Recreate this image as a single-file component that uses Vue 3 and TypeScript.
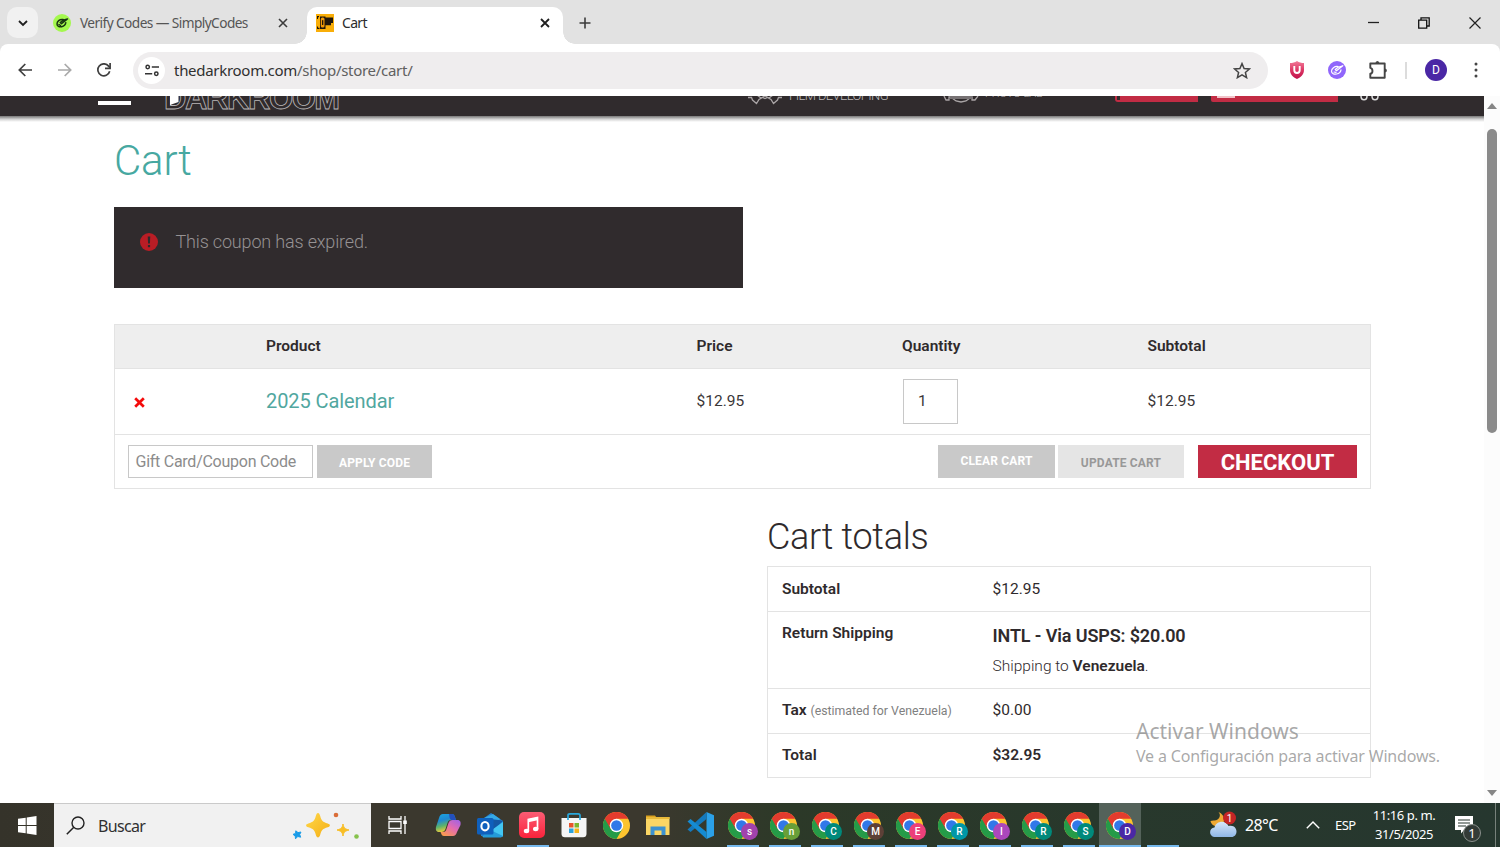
<script setup lang="ts">
interface TaskApp {
  kind: 'copilot' | 'outlook' | 'music' | 'store' | 'chrome' | 'files' | 'code' | 'empty'
  letter?: string
  color?: string
  open?: boolean
  active?: boolean
}

const profile = (letter: string, color: string, active = false): TaskApp => ({
  kind: 'chrome', letter, color, open: true, active,
})

const apps: TaskApp[] = [
  { kind: 'copilot' },
  { kind: 'outlook' },
  { kind: 'music', open: true },
  { kind: 'store' },
  { kind: 'chrome' },
  { kind: 'files' },
  { kind: 'code' },
  profile('s', '#a142ad'),
  profile('n', '#689f38'),
  profile('C', '#00897b'),
  profile('M', '#5d4037'),
  profile('E', '#ec407a'),
  profile('R', '#0097a7'),
  profile('I', '#ab47bc'),
  profile('R', '#00897b'),
  profile('S', '#00897b'),
  profile('D', '#4a27a5', true),
  { kind: 'empty', open: true },
]
</script>

<template>
  <div class="screen">
    <div class="tabstrip">
      <button class="tab-search">
        <svg width="12" height="12" viewBox="0 0 12 12"><path d="M2 4l4 4 4-4" fill="none" stroke="#1f1f1f" stroke-width="1.8" /></svg>
      </button>
      <div class="tab idle">
        <svg class="fav" width="18" height="18" viewBox="0 0 18 18">
          <circle cx="9" cy="9" r="9" fill="#a4f84e" />
          <path d="M10 5.500C6.500 5 4 7.500 4 10c0 2.300 2.300 3.200 4.600 2.700 2.400-.5 3.900-2 4.200-4M7.200 8.500l1.300 1.200L14.500 5l-4.300 1.300zM6 10.500l1.500 1" fill="none" stroke="#183410" stroke-width="1.500" stroke-linecap="round" stroke-linejoin="round" />
        </svg>
        <span class="tab-title t1">Verify Codes — SimplyCodes</span>
        <svg class="x x1" width="10" height="10" viewBox="0 0 10 10"><path d="M1 1l8 8M9 1L1 9" stroke="#3c3c3c" stroke-width="1.6" /></svg>
      </div>
      <div class="tab current">
        <svg class="fav" width="18" height="18" viewBox="0 0 18 18">
          <rect width="18" height="18" fill="#f9ae08" />
          <path d="M1 2h2v1.300H2V5H1zM1 12.500h1v1.300h1.500V15H1zM4 2.500h5.500v12.500H4zM9.500 3.500H17v5.500h-2v2.300H9.500z" fill="#20170c" />
          <rect x="4.800" y="3.500" width="3.700" height="10" rx="1.500" fill="#f39a07" />
          <rect x="6" y="6" width="1.300" height="5" rx=".6" fill="#20170c" />
        </svg>
        <span class="tab-title t2">Cart</span>
        <svg class="x x2" width="10" height="10" viewBox="0 0 10 10"><path d="M1 1l8 8M9 1L1 9" stroke="#1f1f1f" stroke-width="1.8" /></svg>
      </div>
      <svg class="plus" width="12" height="12" viewBox="0 0 12 12"><path d="M6 .5v11M.5 6h11" stroke="#3c3c3c" stroke-width="1.6" /></svg>
      <div class="window-controls">
        <svg width="12" height="12" viewBox="0 0 12 12"><path d="M1 5.500h11" stroke="#222" stroke-width="1.300" /></svg>
        <svg width="12" height="12" viewBox="0 0 12 12"><path d="M.7 3.200h8v8h-8zM3 3V.8h8.200V9H9" fill="none" stroke="#111" stroke-width="1.300" /></svg>
        <svg width="12" height="12" viewBox="0 0 12 12"><path d="M.5.5l11 11M11.500.5l-11 11" stroke="#222" stroke-width="1.200" /></svg>
      </div>
    </div>

    <div class="toolbar">
      <svg class="nav-back" width="14" height="14" viewBox="0 0 14 14"><path d="M14 7H1.500M7.300 1L1.300 7l6 6" fill="none" stroke="#3f3f3f" stroke-width="1.700" /></svg>
      <svg class="nav-forward" width="14" height="14" viewBox="0 0 14 14"><path d="M0 7h12.500M6.700 1l6 6-6 6" fill="none" stroke="#a9a9a9" stroke-width="1.700" /></svg>
      <svg class="nav-reload" width="14" height="14" viewBox="0 0 14 14"><path d="M12.700 8.300A6 6 0 1 1 11.600 3.100L13 4.600" fill="none" stroke="#3f3f3f" stroke-width="1.700" /><path d="M13.100 0v5.300H8" fill="none" stroke="#3f3f3f" stroke-width="1.700" /></svg>
      <div class="omnibox">
        <span class="site-info">
          <svg width="14" height="13" viewBox="0 0 14 13" fill="none" stroke="#333" stroke-width="1.500"><circle cx="2.700" cy="3" r="1.700" /><path d="M6.800 3H14M0 9.800h7.200" /><circle cx="11.300" cy="9.800" r="1.700" /></svg>
        </span>
        <span class="url">thedarkroom.com<em>/shop/store/cart/</em></span>
        <svg class="star" width="18" height="17" viewBox="0 0 18 17"><path d="M9 1.600l2.100 4.900 5.300.45-4 3.500 1.200 5.200L9 12.900l-4.600 2.750 1.200-5.200-4-3.500 5.300-.45z" fill="none" stroke="#444" stroke-width="1.500" /></svg>
      </div>
      <svg class="ext-u" width="16" height="18" viewBox="0 0 16 18">
        <defs><linearGradient id="shield" x1="0" y1="0" x2="0" y2="1"><stop offset="0" stop-color="#f27b98" /><stop offset=".5" stop-color="#dd3765" /><stop offset="1" stop-color="#bf124b" /></linearGradient></defs>
        <path d="M8 0c2 1.400 4.500 2 7 2v7c0 4.500-3 7-7 9-4-2-7-4.500-7-9V2c2.500 0 5-.6 7-2z" fill="url(#shield)" />
        <path d="M5.300 5v4.300c0 3.600 5.400 3.600 5.400 0V5" fill="none" stroke="#fff" stroke-width="1.900" />
      </svg>
      <svg class="ext-s" width="18" height="18" viewBox="0 0 18 18">
        <circle cx="9" cy="9" r="9" fill="#9066fb" />
        <path d="M10 5.500C6.500 5 3.500 7.500 3.500 10.300c0 2.300 2.600 3.200 5.100 2.700 2.600-.5 4.100-2 4.400-4.200M7.200 8.500l1.300 1.200L14.800 4.700l-4.600 1.600zM6 11l2 .3" fill="none" stroke="#fff" stroke-width="1.200" stroke-linecap="round" stroke-linejoin="round" />
      </svg>
      <svg class="ext-p" width="20" height="20" viewBox="0 0 20 20"><path d="M2.300 3.500h14.400v14.200H2.300v-4c2.900-.4 2.900-5.200 0-5.800z" fill="none" stroke="#454545" stroke-width="1.900" stroke-linejoin="round" /><path d="M7.400 3.500a2 2.500 0 0 1 4 0zM16.700 8.400a2.200 2 0 0 1 0 4z" fill="#454545" /></svg>
      <i class="bar"></i>
      <span class="avatar">D</span>
      <svg class="dots" width="4" height="16" viewBox="0 0 4 16" fill="#444"><circle cx="2" cy="2" r="1.500" /><circle cx="2" cy="8" r="1.500" /><circle cx="2" cy="14" r="1.500" /></svg>
    </div>

    <div class="viewport">
      <div class="page">
        <header class="site-header">
          <span class="burger"></span>
          <span class="logo">
            DARKROOM
            <svg class="wedge" width="9" height="9" viewBox="0 0 9 9"><path d="M0 0h8.500v6L0 9z" fill="#fff" /></svg>
          </span>
          <svg class="nav-icon film" width="34" height="10" viewBox="0 0 34 10"><path d="M0 2.500h3.500L4.500 5l4 3.500 2.500-4 3.500-2 2.500 1 2.500-1 3.500 2 2.500 4 4-3.500 1-2.500H34M9 0l4 3 4-2 4 2 4-3" fill="none" stroke="#aaa5a6" stroke-width="1.300" /></svg>
          <span class="nav-text film-text">FILM DEVELOPING</span>
          <svg class="nav-icon lab" width="36" height="7" viewBox="0 0 36 7"><path d="M1 0l2 4h3V1h23v3h3l3-4M9 2l4 3 5 1 5-1 4-3" fill="none" stroke="#aaa5a6" stroke-width="1.300" /><path d="M7 0h22v3H7z" fill="#777274" /></svg>
          <span class="nav-text lab-text">PHOTO LAB</span>
          <span class="pill p1"></span>
          <span class="pill p2"></span>
          <svg class="basket" width="20" height="5" viewBox="0 0 20 5" fill="none" stroke="#ddd" stroke-width="1.500"><path d="M1 0C1 5 7 5 7 0M12 0c0 5 6 5 6 0" /></svg>
        </header>

        <main class="content">
          <h1>Cart</h1>
          <div class="notice">
            <svg width="18" height="18" viewBox="0 0 18 18"><circle cx="9" cy="9" r="9" fill="#b91d25" /><path d="M7.700 3.500h2.600l-.4 7H8.100z" fill="#2f2a2c" /><rect x="7.900" y="12" width="2.200" height="2.200" fill="#2f2a2c" /></svg>
            <span>This coupon has expired.</span>
          </div>

          <section class="cart">
            <div class="cart-row head">
              <span></span><span>Product</span><span>Price</span><span>Quantity</span><span>Subtotal</span>
            </div>
            <div class="cart-row item">
              <span class="remove"><svg width="11" height="11" viewBox="0 0 11 11"><path d="M1.200 1.200l8.600 8.600M9.800 1.200L1.200 9.800" stroke="#f40b0b" stroke-width="2.700" /></svg></span>
              <a class="product">2025 Calendar</a>
              <span class="price">$12.95</span>
              <span class="qty">1</span>
              <span class="price">$12.95</span>
            </div>
            <div class="actions">
              <span class="coupon">Gift Card/Coupon Code</span>
              <button class="btn apply">APPLY CODE</button>
              <button class="btn clear">CLEAR CART</button>
              <button class="btn update">UPDATE CART</button>
              <button class="btn checkout">CHECKOUT</button>
            </div>
          </section>

          <section class="totals">
            <h2>Cart totals</h2>
            <dl>
              <div class="r1"><dt>Subtotal</dt><dd>$12.95</dd></div>
              <div class="r2"><dt>Return Shipping</dt><dd><p class="method">INTL - Via USPS: $20.00</p><p class="dest">Shipping to <b>Venezuela</b>.</p></dd></div>
              <div class="r3"><dt>Tax <small>(estimated for Venezuela)</small></dt><dd>$0.00</dd></div>
              <div class="r4"><dt>Total</dt><dd><b>$32.95</b></dd></div>
            </dl>
          </section>
        </main>
      </div>

      <div class="scrollbar">
        <svg width="10" height="6" viewBox="0 0 10 6"><path d="M0 6l5-6 5 6z" fill="#868686" /></svg>
        <i class="thumb"></i>
        <svg class="down" width="10" height="6" viewBox="0 0 10 6"><path d="M0 0l5 6 5-6z" fill="#868686" /></svg>
      </div>
    </div>

    <div class="watermark">
      <p class="w1">Activar Windows</p>
      <p class="w2">Ve a Configuración para activar Windows.</p>
    </div>

    <footer class="taskbar">
      <div class="start">
        <svg width="19" height="19" viewBox="0 0 19 19" fill="#fff"><path d="M0 2.800l7.700-1.100V9H0zM8.700 1.500L18.500 0v9H8.700zM0 10h7.700v7.300L0 16.200zM8.700 10h9.800v9l-9.800-1.500z" /></svg>
      </div>
      <div class="search">
        <svg class="glass" width="19" height="19" viewBox="0 0 19 19"><circle cx="12" cy="7" r="6" fill="none" stroke="#222" stroke-width="1.400" /><path d="M7.800 11.300L.8 18.200" stroke="#222" stroke-width="1.500" /></svg>
        <span>Buscar</span>
        <svg class="sparkles" width="68" height="28" viewBox="0 0 68 28">
          <defs><linearGradient id="gold" x1="0" y1="0" x2="1" y2="1"><stop offset="0" stop-color="#ffd84a" /><stop offset="1" stop-color="#f4ae15" /></linearGradient></defs>
          <path d="M26 1c1 0 1.600 1 2.200 3 1.300 4.800 2.500 6 7.500 7.500 2.900.9 2.900 2.900 0 3.800-5 1.500-6.200 2.800-7.500 7.500-1 3.700-3.400 3.700-4.400 0-1.300-4.800-2.500-6-7.500-7.500-2.900-.9-2.900-2.900 0-3.800 5-1.500 6.200-2.700 7.500-7.500.6-2 1.200-3 2.200-3z" fill="url(#gold)" />
          <path d="M51 12c.8 4 1.700 4.800 6 6-4.300 1.200-5.200 2-6 6-.8-4-1.700-4.800-6-6 4.300-1.200 5.200-2 6-6z" fill="#f8be25" stroke="#f8be25" />
          <path d="M3.800 18.800l2.200 1.800 3-.6-1.300 2.500 1 2.700-2.900-.7-2.300 2.300-.3-2.900-2.200-1.500 2.600-1z" fill="#1a9ce8" stroke="#1a9ce8" stroke-linejoin="round" />
          <circle cx="44" cy="3" r="2.300" fill="#da6d38" /><circle cx="64.500" cy="24.500" r="2.300" fill="#86c24c" />
        </svg>
      </div>
      <svg class="taskview" width="19" height="18" viewBox="0 0 19 18" fill="none" stroke="#fff" stroke-width="1.300"><path d="M1 0v3h12V0M1 18v-3h12v3M1 5.500h12v7H1zM17 0v18" /><path d="M15.200 4.500h3.600V8h-3.600z" fill="#fff" stroke="none" /></svg>

      <div class="apps">
        <div v-for="(app, i) in apps" :key="i" class="app" :class="{ open: app.open, active: app.active }">
          <svg v-if="app.kind === 'chrome'" width="27" height="27" viewBox="0 0 48 48" :class="{ shifted: app.letter }">
            <circle cx="24" cy="24" r="24" fill="#fdc32e" />
            <path d="M24 24L3.200 12A24 24 0 0 0 24 48l10.400-18z" fill="#259b48" />
            <path d="M3.200 12A24 24 0 0 1 44.800 12H24L13.600 30z" fill="#e33b2e" />
            <circle cx="24" cy="24" r="12" fill="#fff" /><circle cx="24" cy="24" r="9.500" fill="#3178e8" />
          </svg>
          <svg v-else-if="app.kind === 'copilot'" width="26" height="26" viewBox="0 0 26 26">
            <defs>
              <linearGradient id="cpa" x1="0" y1="0" x2=".3" y2="1"><stop offset="0" stop-color="#1aa6e0" /><stop offset=".4" stop-color="#2089d2" /><stop offset=".7" stop-color="#5db36a" /><stop offset="1" stop-color="#f0cc3a" /></linearGradient>
              <linearGradient id="cpb" x1="1" y1="0" x2=".2" y2="1"><stop offset="0" stop-color="#9b62e8" /><stop offset=".5" stop-color="#e36bb0" /><stop offset="1" stop-color="#fa9b4d" /></linearGradient>
            </defs>
            <path d="M8 2h9c2 0 2.600 1.500 3 3l1 3h-5c-2 0-3 1-3.500 3l-2 6c-.7 2-2 3-4 3H4c-3 0-3.500-2.500-3-5L4 6c.7-2.600 2-4 4-4z" fill="url(#cpa)" />
            <path d="M14 2h3c2 0 2.600 1.500 3 3l1 3h-5c-2-2-1.500-4-2-6z" fill="#234fbd" />
            <path d="M18 24H9c-2 0-2.600-1.500-3-3l-.5-1H8c2 0 3-1 3.500-3l2-6c.7-2 2-3 4-3h5c3 0 3.500 2.500 3 5l-3.500 7c-.8 2.600-2 4-4 4z" fill="url(#cpb)" />
          </svg>
          <svg v-else-if="app.kind === 'outlook'" width="28" height="26" viewBox="0 0 28 26">
            <path d="M4 9L15 1l12 8v15H5z" fill="#2480d0" /><path d="M8 6l9-4 7 5-7 8z" fill="#35a9e7" /><path d="M13 7l10 1 4 1-10 9z" fill="#1458a5" />
            <path d="M6 25L27 10v14.500z" fill="#43c6f2" /><path d="M10 16l17 8-2 1.500H7z" fill="#249bd9" />
            <rect x="1" y="6" width="16.500" height="16.500" rx="1.500" fill="#0f60bd" /><ellipse cx="9" cy="14.200" rx="3.600" ry="4.200" fill="none" stroke="#fff" stroke-width="2.100" />
          </svg>
          <svg v-else-if="app.kind === 'music'" width="26" height="26" viewBox="0 0 26 26">
            <defs><linearGradient id="mus" x1="0" y1="0" x2="0" y2="1"><stop offset="0" stop-color="#fb5c74" /><stop offset="1" stop-color="#fa233b" /></linearGradient></defs>
            <rect width="26" height="26" rx="5" fill="url(#mus)" /><path d="M9.300 19V7.500L18.500 5.500V17" fill="none" stroke="#fff" stroke-width="1.700" /><path d="M9.300 7.200l9.200-2v3l-9.200 2z" fill="#fff" /><ellipse cx="7.500" cy="19" rx="2.700" ry="2.200" fill="#fff" /><ellipse cx="16.700" cy="17" rx="2.700" ry="2.200" fill="#fff" />
          </svg>
          <svg v-else-if="app.kind === 'store'" width="26" height="26" viewBox="0 0 26 26">
            <path d="M.5 6h25v16c0 2-1.300 3.300-3.300 3.300H3.800C1.800 25.300.5 24 .5 22z" fill="#f5f5f5" /><path d="M7 8V3.500C7 2.300 7.500 1.800 8.700 1.800h8.600c1.200 0 1.700.5 1.700 1.700V8" fill="none" stroke="#29a8dc" stroke-width="1.700" />
            <path d="M8 11h4.500v4.500H8z" fill="#e8542a" /><path d="M13.500 11H18v4.500h-4.500z" fill="#7db62d" /><path d="M8 16.500h4.500V21H8z" fill="#2ba3dd" /><path d="M13.500 16.500H18V21h-4.500z" fill="#f6b41b" />
          </svg>
          <svg v-else-if="app.kind === 'files'" class="files" width="26" height="24" viewBox="0 0 26 24">
            <path d="M1 2.500h9l2 2.500H1z" fill="#dca11e" /><path d="M1 4h23.500v18H1z" fill="#fbd665" /><path d="M1 4h23.500v2H1z" fill="#e9b93a" /><path d="M5.500 22v-8.500h15V22h-4v-4.500h-7V22z" fill="#3c91d0" />
          </svg>
          <svg v-else-if="app.kind === 'code'" width="27" height="27" viewBox="0 0 27 27">
            <path d="M19.500 0L27 3.200v20.600L19.500 27z" fill="#2ba1e8" /><path d="M19.500 7L3.500 20l-3-2.500L19.500 0z" fill="#1479bd" /><path d="M.5 9.500l3-2.500 16 13v7z" fill="#158bd2" />
          </svg>
          <span v-if="app.letter" class="badge" :style="{ background: app.color }">{{ app.letter }}</span>
        </div>
      </div>

      <div class="tray">
        <svg class="weather" width="30" height="28" viewBox="0 0 30 28">
          <path d="M9.500 1c3 3 1 9-5 8.500L1.500 10c1 5 7 7 11 4s4-10-3-13z" fill="#efa934" />
          <defs><linearGradient id="cloud" x1="0" y1="0" x2="0" y2="1"><stop offset="0" stop-color="#d8e8fb" /><stop offset="1" stop-color="#8fb7e6" /></linearGradient></defs>
          <path d="M6.500 26c-7 0-7-9-1-9.500C7 9.500 17 8.500 19.500 15c5-1.500 8 2 8 5.500 0 3-2 5.500-5 5.500z" fill="url(#cloud)" />
          <circle cx="20.500" cy="7" r="6.500" fill="#c52525" /><text x="20.500" y="10.500" text-anchor="middle">1</text>
        </svg>
        <span class="temp">28°C</span>
        <svg class="caret" width="14" height="8" viewBox="0 0 14 8"><path d="M.8 7.200L7 1l6.200 6.200" fill="none" stroke="#fff" stroke-width="1.400" /></svg>
        <span class="lang">ESP</span>
        <div class="clock"><span class="time">11:16 p. m.</span><span class="date">31/5/2025</span></div>
        <div class="notes">
          <svg width="18" height="18" viewBox="0 0 18 18"><path d="M0 0h18v14h-9l-3 3.500V14H0z" fill="#fff" /><path d="M3 4h12M3 7h12M3 10h8" stroke="#26352d" stroke-width="1.100" /></svg>
          <span>1</span>
        </div>
        <i class="peek"></i>
      </div>
    </footer>
  </div>
</template>

<style>
html, body { margin: 0; overflow: hidden; }
</style>

<style scoped>
.screen { position: relative; width: 1500px; height: 847px; display: flex; flex-direction: column; overflow: hidden; background: #e2e2e2; font-family: Roboto, "Liberation Sans", sans-serif; color: #2f2a2c; }
.screen * { box-sizing: border-box; }
svg { display: block; flex: none; }
p, h1, h2, dl, dd { margin: 0; }
button { border: 0; padding: 0; font-family: inherit; }
span { white-space: nowrap; }

.tabstrip { height: 44px; flex: none; display: flex; background: #e2e2e2; padding-left: 7px; font-family: "Noto Sans", "Open Sans", sans-serif; }
.tab-search { width: 31px; height: 31px; margin-top: 7px; border-radius: 10px; background: #f1f1f1; display: flex; align-items: center; justify-content: center; }
.tab { display: flex; align-items: center; height: 31px; }
.idle { margin-top: 7px; width: 269px; padding-left: 15px; }
.current { margin-top: 7px; width: 256px; height: 37px; padding: 0 0 6px 9px; border-radius: 10px 10px 0 0; background: #fff; position: relative; }
.current::before, .current::after { content: ""; position: absolute; bottom: 0; width: 12px; height: 12px; }
.current::before { left: -12px; background: radial-gradient(circle at 0 0, transparent 11.5px, #fff 12px); }
.current::after { right: -12px; background: radial-gradient(circle at 100% 0, transparent 11.5px, #fff 12px); }
.tab-title { margin-left: 9px; font-size: 14px; line-height: 20px; color: #555; }
.t1 { width: 168px; font-size: 13.7px; letter-spacing: -.58px; }
.t2 { width: 168px; color: #2c2c2c; letter-spacing: -.7px; margin-left: 8px; }
.x1 { margin-left: 30px; }
.x2 { margin-left: auto; margin-right: 13px; }
.plus { margin: 17px 0 0 16px; }
.window-controls { margin-left: auto; margin-right: 19px; display: flex; gap: 39px; padding-top: 17px; }

.toolbar { height: 52px; flex: none; display: flex; align-items: center; padding-left: 18px; background: #fff; border-radius: 8px 8px 0 0; }
.nav-forward { margin-left: 26px; }
.nav-reload { margin-left: 25px; }
.omnibox { width: 1135px; height: 37px; margin-left: 22px; border-radius: 19px; background: #efedee; display: flex; align-items: center; }
.site-info { width: 27px; height: 27px; margin-left: 5px; border-radius: 50%; background: #fff; display: flex; align-items: center; justify-content: center; }
.url { margin-left: 9px; font-family: "Noto Sans", "Open Sans", sans-serif; font-size: 15px; line-height: 20px; color: #303030; letter-spacing: -.29px; }
.url em { font-style: normal; color: #606060; }
.star { margin-left: auto; margin-right: 17px; }
.ext-u { margin-left: 21px; }
.ext-s { margin-left: 23px; }
.ext-p { margin-left: 22px; }
.bar { width: 2px; height: 17px; margin-left: 17px; background: #dcdcdc; }
.avatar { width: 22px; height: 22px; margin-left: 18px; border-radius: 50%; background: #4a27a5; color: #fff; font-size: 12px; line-height: 22px; text-align: center; }
.dots { margin-left: 27px; }

.viewport { height: 707px; flex: none; display: flex; background: #fff; }
.page { width: 1484px; height: 707px; overflow: hidden; }
.site-header { height: 20px; display: flex; align-items: flex-end; overflow: hidden; background: #302b2d; }
.content { position: relative; padding: 23px 113px 0 114px; }
.content::before { content: ""; position: absolute; left: 0; right: 0; top: 0; height: 6px; background: linear-gradient(#777, #d4d4d4 55%, #fff); }
.burger { width: 33px; height: 4px; margin: 0 0 11px 98px; background: #fff; }
.logo { position: relative; width: 175px; height: 24px; margin: 0 0 8px 33px; font-family: "Liberation Sans", sans-serif; font-weight: 700; font-size: 31px; letter-spacing: -1.4px; line-height: 30px; color: #302b2d; -webkit-text-stroke: .8px #bab6b7; white-space: nowrap; }
.wedge { position: absolute; left: 6px; top: 12px; }
.nav-icon.film { margin: 0 0 11px 409px; }
.film-text { margin: 0 0 12px 7px; width: 100px; letter-spacing: -.62px; }
.nav-text { font-size: 13px; line-height: 16px; font-weight: 300; color: #bdb9ba; }
.lab { margin: 0 0 13px 54px; }
.lab-text { margin: 0 0 14px 6px; width: 57px; font-size: 11px; }
.pill { height: 20px; margin-bottom: 14px; background: #c22c44; }
.p1 { width: 83px; margin-left: 73px; border-radius: 0 0 0 3px; background: linear-gradient(#302b2d, #302b2d) 2px 0 / 3px 18px no-repeat, #c22c44; }
.p2 { width: 127px; margin-left: 13px; border-radius: 0 0 0 2px; background: linear-gradient(#f1c3c9, #f1c3c9) 6px 0 / 18px 16px no-repeat, #c22c44; }
.basket { margin: 0 0 15px 22px; }

h1 { font-size: 42px; line-height: 44px; font-weight: 300; letter-spacing: -.2px; color: #47a8a1; }
.notice { width: 629px; height: 81px; margin-top: 24px; margin-bottom: 36px; padding: 0 26px; display: flex; background: #302b2d; color: #969293; font-weight: 300; font-size: 18px; line-height: 22px; letter-spacing: -.17px; }
.notice svg { margin-top: 26px; }
.notice span { margin: 24px 0 0 17.500px; }
.cart { width: 1257px; height: 165px; border: 1px solid #e3e3e3; }
.cart-row { display: grid; grid-template-columns: 151px 430.500px 205.500px 245.500px 1fr; align-items: center; font-size: 15px; }
.head { height: 43px; background: #eee; font-weight: 600; font-size: 15.500px; padding-bottom: 1px; }
.item { height: 66px; border-top: 1px solid #e3e3e3; color: #3a3637; }
.remove { padding-left: 19px; }
.remove svg { margin-top: 1px; }
.product { font-size: 20px; letter-spacing: -.08px; color: #51a79f; padding-bottom: 2px; }
.price { font-size: 15.500px; padding-bottom: 2px; }
.qty { width: 55px; height: 45px; margin-left: 1px; border: 1px solid #c8c8c8; padding-left: 14px; font-size: 15.500px; line-height: 43px; }
.actions { height: 54px; border-top: 1px solid #e3e3e3; padding: 10px 13px; display: flex; }
.coupon { width: 185px; height: 33px; border: 1px solid #c8c8c8; padding-left: 6.500px; font-size: 16px; line-height: 31px; letter-spacing: -.26px; color: #8c8c8c; }
.btn { height: 33px; color: #fff; background: #c9c9c9; font-size: 12px; font-weight: 700; line-height: 35px; letter-spacing: .16px; }
.apply { width: 115px; margin-left: 4px; line-height: 36px; }
.clear { width: 117px; margin-left: auto; line-height: 31px; }
.update { width: 126px; margin-left: 3px; background: #e5e5e5; color: #989898; line-height: 36px; }
.checkout { width: 159px; margin-left: 14px; background: #c22c44; font-size: 22px; line-height: 36px; letter-spacing: 0; }
.totals { width: 604px; margin-left: 653px; padding-top: 27px; }
h2 { font-size: 36px; line-height: 42px; font-weight: 300; letter-spacing: -.3px; margin-bottom: 8px; }
dl { border: 1px solid #e3e3e3; font-size: 15.500px; line-height: 20px; }
dl > div { display: grid; grid-template-columns: 210.500px 1fr; padding: 11px 14px 0; height: 45px; border-top: 1px solid #e3e3e3; }
dl > .r1 { height: 44px; border-top: 0; padding-top: 12px; }
dl > .r2 { height: 77px; }
dl > .r4 { height: 44px; }
dt { font-weight: 600; }
dt small { font-size: 12.300px; font-weight: 400; color: #808080; }
dd b { font-weight: 600; }
.method { font-size: 18px; line-height: 26px; font-weight: 600; letter-spacing: -.12px; }
.dest { font-weight: 300; margin-top: 7px; }
.scrollbar { width: 16px; height: 707px; background: #fcfcfc; display: flex; flex-direction: column; align-items: center; padding: 7px 0; }
.thumb { width: 10px; height: 304px; margin-top: 20px; border-radius: 5px; background: #8a8a8a; }
.down { margin-top: auto; }

.watermark { position: absolute; left: 1136px; top: 717px; color: rgba(135,135,135,.72); font-family: "Noto Sans", "Open Sans", sans-serif; white-space: nowrap; }
.w1 { font-size: 21px; line-height: 28px; }
.w2 { font-size: 16px; line-height: 22px; letter-spacing: -.17px; }

.taskbar { height: 44px; flex: none; display: flex; background: linear-gradient(90deg, #35332a 0, #3b382e 360px, #3b382e 650px, #2c3928 790px, #28382c 1100px, #26372f 1500px); font-family: "Noto Sans", "Open Sans", sans-serif; }
.start { width: 54px; padding: 13px 0 0 18px; }
.search { width: 317px; display: flex; background: #f1f1f1; border-top: 1px solid #cacaca; font-size: 16px; color: #303030; }
.glass { margin: 12px 0 0 12px; }
.search span { margin: 11px 0 0 13px; line-height: 22px; letter-spacing: -.65px; }
.sparkles { margin: 8px 11px 0 auto; }
.taskview { margin: 13px 0 0 17px; }
.apps { display: flex; margin-left: 20px; }
.app { position: relative; width: 42px; height: 44px; display: flex; justify-content: center; padding-top: 9px; }
.app.open::after { content: ""; position: absolute; left: 6px; bottom: 0; width: 32px; height: 2px; background: #76b9ed; }
.app.active { background: #54625a; }
.app.active::after { left: 0; width: 42px; }
.badge { position: absolute; left: 20px; top: 20px; width: 17px; height: 17px; border-radius: 50%; color: #fff; font: 500 10px/17px Roboto, sans-serif; text-align: center; }
.shifted { margin-right: 1px; }
.files { margin-top: 1px; }
.tray { display: flex; flex: 1; color: #fff; margin-left: 26px; }
.weather { margin-top: 8px; }
.weather text { fill: #fff; font: 10px Roboto, sans-serif; }
.temp { width: 33px; margin: 11px 0 0 6px; font-size: 16px; line-height: 22px; letter-spacing: -.6px; }
.caret { margin: 18px 0 0 28px; }
.lang { width: 21px; margin: 12px 0 0 15px; font-size: 13px; line-height: 20px; letter-spacing: -.6px; }
.clock { width: 64px; margin: 3px 0 0 16px; display: flex; flex-direction: column; align-items: center; font-size: 13px; line-height: 19px; letter-spacing: -.4px; }
.notes { position: relative; width: 28px; margin: 13px 0 0 19px; }
.notes span { position: absolute; left: 8px; top: 8px; width: 18px; height: 18px; border: 1px solid #8a908c; border-radius: 50%; background: #333b37; font-size: 13px; line-height: 16px; text-align: center; }
.peek { width: 1px; height: 44px; margin-left: auto; margin-right: 4px; background: #77817b; }
</style>
